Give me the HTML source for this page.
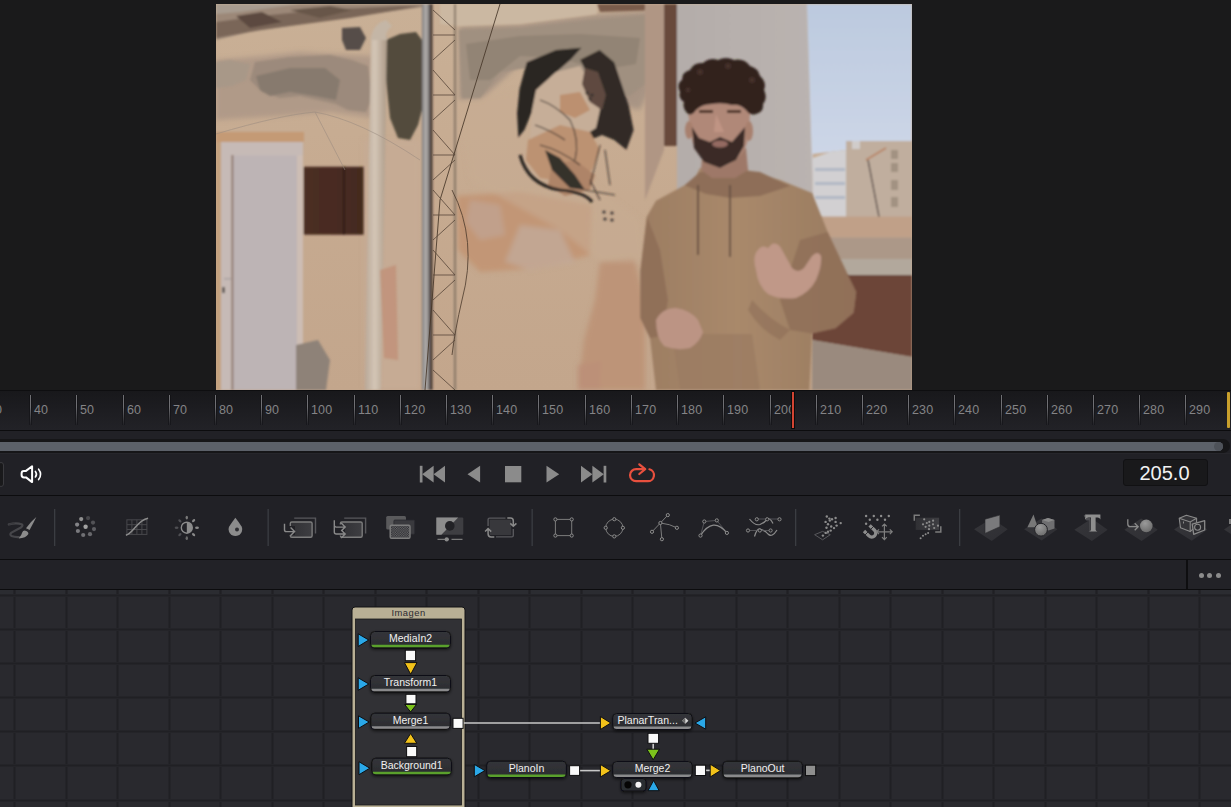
<!DOCTYPE html>
<html><head><meta charset="utf-8">
<style>
*{margin:0;padding:0;box-sizing:border-box}
html,body{width:1231px;height:807px;overflow:hidden;background:#1a1a1b;font-family:"Liberation Sans",sans-serif}
.abs{position:absolute}
#viewer{position:absolute;left:0;top:0;width:1231px;height:390px;background:#1a1a1b}
#photo{position:absolute;left:216px;top:4px;width:696px;height:386px;overflow:hidden;background:#d8c2a0}
#l390{position:absolute;left:0;top:390px;width:1231px;height:1px;background:#0e0e10}
#ruler{position:absolute;left:0;top:391px;width:1231px;height:39px;background:linear-gradient(#18181b,#222227);overflow:hidden}
.tk{position:absolute;top:4px;width:1px;height:30px;background:linear-gradient(#707074,#707074 40%,rgba(112,112,116,0));box-shadow:-1px 0 0 rgba(10,10,12,0.35),1px 0 0 rgba(10,10,12,0.35)}
.lb{position:absolute;top:12px;font-size:12.5px;line-height:14px;color:#848486;letter-spacing:0.15px}
#ph{position:absolute;left:791px;top:0px;width:4px;height:38px;background:#0b0b0c}
#ph i{position:absolute;left:1px;top:1px;width:2px;height:36px;background:#d24432}
#endm{position:absolute;left:1227px;top:1px;width:3px;height:36px;background:#c9a02c;border-radius:1px}
#l430{position:absolute;left:0;top:430px;width:1231px;height:1px;background:#0c0c0e}
#scr{position:absolute;left:0;top:431px;width:1231px;height:22px;background:#212126}
#trk{position:absolute;left:-10px;top:8px;width:1240px;height:14px;border-radius:7px;background:#161618}
#thumb{position:absolute;left:-10px;top:11px;width:1233px;height:9px;border-radius:5px;background:#5c6169}
#knob{position:absolute;left:1214px;top:11px;width:9px;height:9px;border-radius:5px;background:#4e5259}
#tp{position:absolute;left:0;top:453px;width:1231px;height:42px;background:#212126;border-top:1px solid #26262b}
#l495{position:absolute;left:0;top:495px;width:1231px;height:1px;background:#0c0c0e}
#tb{position:absolute;left:0;top:496px;width:1231px;height:63px;background:#212126}
#l559{position:absolute;left:0;top:559px;width:1231px;height:1px;background:#0c0c0e}
#pb{position:absolute;left:0;top:560px;width:1231px;height:29px;background:#222227}
#l589{position:absolute;left:0;top:589px;width:1231px;height:1px;background:#0c0c0e}
#ng{position:absolute;left:0;top:590px;width:1231px;height:217px;background:#29292e;overflow:hidden}
#ngt{position:absolute;left:0;top:0;width:1231px;height:5px;background:#2b2c31}
.gv{position:absolute;top:0;width:3px;height:217px;background:linear-gradient(90deg,#26262b,#202024,#26262b)}
.gh{position:absolute;left:0;width:1231px;height:3px;background:linear-gradient(#26262b,#202024,#26262b)}
.sep{position:absolute;width:2px;background:#3a3b40}
</style></head><body>
<div id="viewer"><div id="photo"><svg width="696" height="386" viewBox="216 4 696 386" style="display:block">
<defs>
<linearGradient id="sky" x1="0" y1="0" x2="0" y2="1"><stop offset="0" stop-color="#bccadf"/><stop offset="1" stop-color="#d0d8e8"/></linearGradient>
<linearGradient id="wallg" x1="0" y1="0" x2="0" y2="1"><stop offset="0" stop-color="#c9b096"/><stop offset="0.5" stop-color="#c6aa90"/><stop offset="1" stop-color="#c3a68c"/></linearGradient>
<linearGradient id="hood" x1="0" y1="0" x2="1" y2="0"><stop offset="0" stop-color="#9c7d62"/><stop offset="0.45" stop-color="#a9896b"/><stop offset="1" stop-color="#987a5f"/></linearGradient>
<linearGradient id="pipe" x1="0" y1="0" x2="1" y2="0"><stop offset="0" stop-color="#b8a898"/><stop offset="0.45" stop-color="#d4c6b6"/><stop offset="1" stop-color="#ac9a88"/></linearGradient>
<linearGradient id="pole" x1="0" y1="0" x2="1" y2="0"><stop offset="0" stop-color="#7e7c7c"/><stop offset="0.5" stop-color="#b6b2b0"/><stop offset="1" stop-color="#625e5c"/></linearGradient>
<linearGradient id="wb" x1="0" y1="0" x2="1" y2="0"><stop offset="0" stop-color="#b4adaa"/><stop offset="1" stop-color="#bab3b0"/></linearGradient>
<linearGradient id="box" x1="0" y1="0" x2="1" y2="0"><stop offset="0" stop-color="#4c2e25"/><stop offset="1" stop-color="#44291f"/></linearGradient>
<filter id="bl" x="-2%" y="-2%" width="104%" height="104%"><feGaussianBlur stdDeviation="0.9"/></filter>
<filter id="bl3" x="-10%" y="-10%" width="120%" height="120%"><feGaussianBlur stdDeviation="2.5"/></filter>
</defs>
<rect x="216" y="4" width="696" height="386" fill="url(#wallg)"/>
<g filter="url(#bl3)">
<!-- gray zone top center -->
<polygon points="459,26 520,24 597,14 664,10 664,60 640,110 600,100 560,90 520,64 480,100 459,100" fill="#a89484"/>
<!-- gray zone left -->
<polygon points="216,60 262,56 300,52 372,56 372,118 330,112 280,116 216,120" fill="#b09a88"/>
<!-- orange patch center -->
<polygon points="457,196 520,192 592,205 590,255 540,268 480,272 458,250" fill="#c29676"/>
<polygon points="520,225 560,230 575,262 530,270 505,262" fill="#c2aa9a" opacity="0.8"/>
<polygon points="470,200 500,205 505,235 480,240 466,222" fill="#c0a494" opacity="0.7"/>
<!-- orange patch lower right -->
<polygon points="600,262 634,258 645,300 645,390 578,390 584,340 595,300" fill="#bd9478"/>
<polygon points="578,365 602,360 600,390 578,390" fill="#bc9078"/>
<!-- lighter wall around mural -->
<polygon points="460,100 520,90 600,190 640,220 645,262 600,262 560,230 470,180" fill="#c6ab92" opacity="0.6"/>
<!-- wall between pole and door -->
<polygon points="364,140 420,140 420,390 364,390" fill="#c6ab94"/>
</g>
<g filter="url(#bl)">
<!-- top ledge -->
<polygon points="216,4 430,4 422,7 340,18 250,32 216,40" fill="#9c8878"/>
<polygon points="216,22 260,16 320,10 400,6 422,6 350,18 260,30 216,38" fill="#7a6658"/>
<polygon points="236,16 262,12 282,22 250,28" fill="#5c4a40"/>
<polygon points="290,10 330,6 352,10 320,18" fill="#685649"/>
<polygon points="216,4 300,4 240,12 216,14" fill="#a89c90"/>
<!-- gray patches upper left -->
<polygon points="255,62 290,57 330,55 352,60 368,66 372,98 366,112 348,110 336,104 318,100 300,96 280,98 262,92 250,80" fill="#9c8a7c"/>
<polygon points="256,76 290,68 325,68 340,80 336,100 315,96 290,92 270,96 260,90" fill="#877a6e"/>
<polygon points="216,62 230,60 250,64 246,80 232,86 216,88" fill="#a89888"/>
<polygon points="342,28 360,27 366,38 360,50 346,50 342,40" fill="#564e48"/>
<!-- mold -->
<polygon points="386,40 400,34 416,32 422,40 422,110 418,125 410,140 398,138 390,118 386,80" fill="#524c3e"/>
<!-- gray patches center top -->
<polygon points="459,30 520,28 590,20 660,14 664,40 650,80 630,96 600,92 580,76 540,66 500,72 480,98 462,98" fill="#a09080"/>
<polygon points="466,44 520,36 580,34 640,38 636,64 600,70 560,58 520,56 490,80 470,80" fill="#928474"/>
<polygon points="440,4 597,4 597,14 520,24 459,26 440,24" fill="#cbb8a2"/>
<polygon points="597,4 664,4 664,10 600,12" fill="#7a5c4c"/>
<!-- door -->
<rect x="216" y="132" width="88" height="10" fill="#c49a74"/>
<rect x="216" y="142" width="5" height="248" fill="#c4a27e"/>
<rect x="221" y="142" width="82" height="248" fill="#c6bab6"/>
<rect x="233" y="155.5" width="64" height="234.5" fill="#bdb4b5"/>
<rect x="231.5" y="155" width="1.8" height="235" fill="#8c7468"/>
<rect x="297" y="155.5" width="6" height="234.5" fill="#cdbdb4"/>
<rect x="224" y="278" width="7" height="1.5" fill="#a8a0a0"/>
<rect x="222.5" y="287" width="2" height="6" fill="#2a2420"/>
<!-- box -->
<rect x="303.6" y="166.7" width="60" height="68" fill="url(#box)"/>
<rect x="343" y="166.7" width="1.6" height="68" fill="#2a1a14"/>
<!-- stains lower left -->
<polygon points="296,345 318,340 330,360 326,390 296,390" fill="#8e8278"/>
<!-- pipe -->
<polygon points="371,36 387,36 381,390 365,390" fill="url(#pipe)"/>
<polygon points="380,270 396,265 398,360 384,358" fill="#c09078" opacity="0.8"/>
<path d="M371,40 Q372,24 386,20 L392,26 Q384,32 387,40 Z" fill="#c4b6a6"/>
<!-- mural wings -->
<polygon points="519.5,89 526.8,62.3 556,50 581.4,47.7 570.5,59.8 551,76.8 536.5,101 524.4,130 518.3,137.5 517.1,113" fill="#2c2624"/>
<polygon points="580.2,59.8 599.7,50 614.2,62.3 621.5,84 628.8,106 633.6,130 626.4,149.7 614.2,140 602,135 590,140 580.2,154.5 575.4,149.7 587.5,125.4 599.7,108.4 594.8,86.5 585,69.5" fill="#302a26"/>
<!-- mural body -->
<polygon points="536,90 556,72 580,66 594,88 600,110 596,128 585,135 570,150 552,165 538,160 530,140 532,110" fill="#c6ae98"/>
<polygon points="585,68 598,72 606,95 602,110 590,102 582,84" fill="#5e4a40"/>
<polygon points="560,95 580,92 590,110 575,118 560,112" fill="#bc9070"/>
<polygon points="528,140 560,125 590,132 600,150 592,170 570,182 540,178 526,160" fill="#bc9272"/>
<polygon points="552,165 575,160 595,175 590,190 565,196 548,185" fill="#ae8468"/>
<g fill="none" stroke="#2c2624" stroke-width="1.1" opacity="0.85">
<path d="M540,100 Q555,105 570,120 Q580,140 575,160"/>
<path d="M535,125 Q550,130 565,140"/>
<path d="M540,145 Q560,150 580,165"/>
<path d="M600,145 L590,185 M605,150 L610,185 M590,180 L600,200 M585,190 L615,195"/>
</g>
<path d="M520,155 Q528,185 560,190 Q585,192 592,202" fill="none" stroke="#2c2624" stroke-width="3.2"/>
<polygon points="545,150 560,158 575,175 585,190 570,188 552,170" fill="#36302c"/>
<g fill="#36302c"><circle cx="587" cy="93" r="1.6"/><circle cx="592" cy="95" r="1.6"/><circle cx="590" cy="99" r="1.6"/></g>
<g fill="#3a3030"><circle cx="604" cy="212" r="1.6"/><circle cx="612" cy="213" r="1.6"/><circle cx="605" cy="219" r="1.6"/><circle cx="612" cy="220" r="1.6"/></g>
<!-- wall right edge strip -->
<polygon points="645,4 664,4 664,150 645,200" fill="#b09684"/>
<rect x="664" y="4" width="13" height="142" fill="#68483a"/>
<!-- white building -->
<polygon points="677,4 807,4 812.6,183 812.6,200 677,200" fill="url(#wb)"/>
<!-- sky -->
<polygon points="807,4 912,4 912,145 846,150 812.6,154 812.6,183" fill="url(#sky)"/>
<!-- buildings -->
<polygon points="812.6,158 830,152 846,150 846,217 812.6,217" fill="#d2d0d2"/>
<rect x="846" y="141" width="66" height="76" fill="#c0ae9e"/>
<rect x="852" y="141" width="8" height="8" fill="#d0ccca"/>
<g fill="#a29282"><rect x="891" y="150" width="7" height="9"/><rect x="891" y="163" width="7" height="9"/><rect x="891" y="180" width="7" height="10"/><rect x="891" y="197" width="7" height="10"/></g>
<g fill="#b0b8c4"><rect x="815" y="168" width="30" height="3"/><rect x="815" y="182" width="30" height="3"/><rect x="815" y="196" width="30" height="3"/></g>
<path d="M868,160 L880,222" stroke="#3a3030" stroke-width="1.2"/>
<path d="M866,160 L886,148" stroke="#b88060" stroke-width="1.5"/>
<!-- parapet etc -->
<rect x="812" y="216.5" width="100" height="21" fill="#c0a088"/>
<rect x="812" y="237.5" width="100" height="22" fill="#ac9888"/>
<rect x="812" y="259" width="100" height="16" fill="#b2a89c"/>
<polygon points="812,275 912,275 912,357 812,340" fill="#6c4438"/>
<polygon points="812,340 912,357 912,390 812,390" fill="#9a8a7e"/>
<!-- pole -->
<rect x="422" y="4" width="8" height="386" fill="url(#pole)"/>
<rect x="430" y="4" width="2.5" height="386" fill="#463830"/>
<rect x="454" y="4" width="2" height="386" fill="#887868"/>
</g>
<g stroke="#524236" stroke-width="0.9" fill="none" opacity="0.85">
<path d="M433,10 L455,30 M433,60 L455,40 M433,70 L455,95 M433,120 L455,100 M433,130 L455,155 M433,180 L455,160 M433,190 L455,215 M433,240 L455,220 M433,250 L455,275 M433,300 L455,280 M433,310 L455,335 M433,360 L455,340 M433,370 L455,390"/>
<path d="M433,35 H455 M433,95 H455 M433,155 H455 M433,215 H455 M433,275 H455 M433,335 H455"/>
<path d="M500,4 L440,200 L425,390" stroke="#463628" stroke-width="1"/>
<path d="M452,190 Q478,240 462,300 Q455,330 452,355" stroke="#463628" stroke-width="0.9"/>
</g>
<g stroke="#9a8c80" stroke-width="0.8" fill="none" opacity="0.7">
<path d="M216,134 Q280,115 315,112 Q360,120 420,160"/>
<path d="M315,112 L345,170"/>
</g>
<g filter="url(#bl)">
<!-- hoodie -->
<path d="M656,390 L650,338 L640.4,318 L640.4,271 L646.9,216.4 L656,200.8 L684.6,185.2 L693.7,180 L700,168 L740,166 L747,170 L780,180 L812.1,193 L827.7,232 L848.5,276.3 L856.3,291.9 L853.7,312.7 L835.5,328.3 L812.1,333.5 L809.5,390 Z" fill="url(#hood)"/>
<path d="M684.6,185.2 L700,172 L740,170 L760,172 L790,186 L760,196 L730,198 L706,194 Z" fill="#8e6e58"/>
<path d="M640.4,271 L646.9,216.4 L660,250 L668,300 L662,336 L650,338 L640.4,318 Z" fill="#8a6a54" opacity="0.7"/>
<path d="M800,240 L827.7,232 L848.5,276.3 L856.3,291.9 L853.7,312.7 L835.5,328.3 L812.1,333.5 L790,330 L780,300 Z" fill="#8e6e58" opacity="0.8"/>
<path d="M672,334 L752,334 L760,390 L680,390 Z" fill="#9a7a62" opacity="0.7"/>
<path d="M752,300 Q770,320 790,330 L780,340 Q760,330 748,310 Z" fill="#8a6a54" opacity="0.5"/>
<!-- neck -->
<polygon points="703,148 746,148 748,170 735,178 712,178 701,170" fill="#9e7868"/>
<!-- face -->
<path d="M688,112 Q688,100 718,98 Q750,100 750,114 L748,140 Q742,162 720,168 Q698,162 692,140 Z" fill="#b08878"/>
<ellipse cx="689" cy="130" rx="4" ry="9" fill="#a8806e"/>
<ellipse cx="749" cy="131" rx="4" ry="10" fill="#a8806e"/>
<!-- beard -->
<path d="M692,127 L699,138 L710,142 L720,137 L732,142 L745,127 L744,146 L736,160 L720,168 L704,162 L694,148 Z" fill="#3a2c28"/>
<ellipse cx="720" cy="144" rx="8" ry="3.5" fill="#946a62"/>
<rect x="699" y="110" width="14" height="3" fill="#4a3328"/>
<rect x="727" y="110" width="14" height="3" fill="#4a3328"/>
<path d="M716,114 L714,132 L724,132 Z" fill="#c09484"/>
<!-- hair -->
<path d="M680,92 Q676,84 682,80 Q682,72 690,70 Q694,62 703,63 Q710,57 718,60 Q726,56 734,60 Q744,58 750,66 Q758,68 760,76 Q767,82 764,90 Q768,98 763,104 Q764,112 756,114 Q750,116 746,110 Q740,104 732,105 Q722,102 712,104 Q702,104 696,110 Q692,116 688,114 Q682,108 684,102 Q678,98 680,92 Z" fill="#30231e"/>
<g fill="#44302a"><circle cx="700" cy="72" r="3"/><circle cx="728" cy="66" r="3"/><circle cx="752" cy="80" r="3"/><circle cx="688" cy="90" r="2.5"/></g>
<!-- hands -->
<path d="M756,270 Q752,256 758,250 Q762,244 768,248 L772,244 Q778,242 782,250 L792,268 Q798,274 804,268 L812,256 Q818,250 821,256 Q822,266 816,280 Q810,292 796,298 Q780,300 768,294 Q758,286 756,270 Z" fill="#c09888"/>
<path d="M656,320 Q662,308 676,308 Q690,310 698,320 L703,332 Q700,342 690,348 Q676,351 664,346 Q656,338 656,320 Z" fill="#bc9484"/>
<!-- drawstrings -->
<rect x="697" y="185" width="2" height="70" fill="#6a5244"/>
<rect x="729" y="185" width="2" height="72" fill="#6a5244"/>
</g>
</svg>
</div></div>
<div id="l390"></div>
<div id="ruler"><div class="tk" style="left:-16px"></div><div class="lb" style="left:-12px">30</div><div class="tk" style="left:30px"></div><div class="lb" style="left:34px">40</div><div class="tk" style="left:76px"></div><div class="lb" style="left:80px">50</div><div class="tk" style="left:123px"></div><div class="lb" style="left:127px">60</div><div class="tk" style="left:169px"></div><div class="lb" style="left:173px">70</div><div class="tk" style="left:215px"></div><div class="lb" style="left:219px">80</div><div class="tk" style="left:261px"></div><div class="lb" style="left:265px">90</div><div class="tk" style="left:307px"></div><div class="lb" style="left:311px">100</div><div class="tk" style="left:354px"></div><div class="lb" style="left:358px">110</div><div class="tk" style="left:400px"></div><div class="lb" style="left:404px">120</div><div class="tk" style="left:446px"></div><div class="lb" style="left:450px">130</div><div class="tk" style="left:492px"></div><div class="lb" style="left:496px">140</div><div class="tk" style="left:538px"></div><div class="lb" style="left:542px">150</div><div class="tk" style="left:585px"></div><div class="lb" style="left:589px">160</div><div class="tk" style="left:631px"></div><div class="lb" style="left:635px">170</div><div class="tk" style="left:677px"></div><div class="lb" style="left:681px">180</div><div class="tk" style="left:723px"></div><div class="lb" style="left:727px">190</div><div class="tk" style="left:770px"></div><div class="lb" style="left:774px">200</div><div class="tk" style="left:816px"></div><div class="lb" style="left:820px">210</div><div class="tk" style="left:862px"></div><div class="lb" style="left:866px">220</div><div class="tk" style="left:908px"></div><div class="lb" style="left:912px">230</div><div class="tk" style="left:954px"></div><div class="lb" style="left:958px">240</div><div class="tk" style="left:1001px"></div><div class="lb" style="left:1005px">250</div><div class="tk" style="left:1047px"></div><div class="lb" style="left:1051px">260</div><div class="tk" style="left:1093px"></div><div class="lb" style="left:1097px">270</div><div class="tk" style="left:1139px"></div><div class="lb" style="left:1143px">280</div><div class="tk" style="left:1185px"></div><div class="lb" style="left:1189px">290</div><div id="ph"><i></i></div><div id="endm"></div></div>
<div id="l430"></div>
<div id="scr"><div id="trk"></div><div id="thumb"></div><div id="knob"></div></div>
<div id="tp"><div style="position:absolute;left:-2px;top:8px;width:6px;height:25px;border:1px solid #3a3a3e;border-radius:3px;background:#19191b"></div>
<svg style="position:absolute;left:0;top:-1px" width="1231" height="42" viewBox="0 453 1231 42">
<g fill="#8b8b8b">
<rect x="419.8" y="465.8" width="2.7" height="16.7"/>
<polygon points="422.2,474.2 433.6,465.8 433.6,482.5"/>
<polygon points="433.6,474.2 445,465.8 445,482.5"/>
<polygon points="467.5,474.2 480.1,465.8 480.1,482.5"/>
<rect x="505" y="466" width="16.3" height="16.3"/>
<polygon points="559.2,474.2 546.5,465.8 546.5,482.5"/>
<polygon points="581,465.8 592.4,474.2 581,482.5"/>
<polygon points="592.4,465.8 603.8,474.2 592.4,482.5"/>
<rect x="603.6" y="465.8" width="2.7" height="16.7"/>
</g>
<g fill="none" stroke="#e8503e" stroke-width="2.2" stroke-linecap="round" stroke-linejoin="round">
<path d="M644.5,469.1 L636.1,469.1 A6.05,6.05 0 0 0 636.1,481.2 L647.5,481.2 A6.05,6.05 0 0 0 649.4,469.3"/>
<path d="M639.3,464.3 L645.2,469.2 L639.3,474"/>
</g>
<!-- speaker -->
<g fill="none" stroke="#ffffff" stroke-width="2" stroke-linejoin="round">
<path d="M26,470.9 L32.1,466.3 L32.1,482.1 L26,477.4 L24,477.4 Q21.6,477.4 21.6,475 L21.6,473.3 Q21.6,470.9 24,470.9 Z"/>
</g>
<g fill="none" stroke="#ffffff" stroke-width="1.6" stroke-linecap="round">
<path d="M35.4,471.4 Q37.6,474.2 35.4,477"/>
<path d="M38.6,469.2 Q42.6,474.3 38.6,479.6"/>
</g>
</svg>
<div style="position:absolute;left:1123px;top:5px;width:85px;height:27px;background:#19191b;border:1px solid #111113;border-radius:3px"></div>
<div style="position:absolute;left:1123px;top:6px;width:85px;height:27px;color:#f2f2f2;font-size:20px;line-height:27px;text-align:center;padding-right:2px">205.0</div>
</div>
<div id="l495"></div>
<div id="tb"><svg style="position:absolute;left:0;top:0" width="1231" height="63" viewBox="0 496 1231 63">
<defs>
<linearGradient id="flr" x1="0" y1="0" x2="1" y2="1"><stop offset="0" stop-color="#36363a"/><stop offset="1" stop-color="#2e2e33"/></linearGradient>
<linearGradient id="rg" x1="0" y1="0" x2="1" y2="0"><stop offset="0" stop-color="#303034"/><stop offset="1" stop-color="#3e3e42"/></linearGradient>
<radialGradient id="sph" cx="0.4" cy="0.3" r="0.7"><stop offset="0" stop-color="#9a9a9a"/><stop offset="1" stop-color="#6e6e6e"/></radialGradient>
<pattern id="chk" width="2.4" height="2.4" patternUnits="userSpaceOnUse"><rect width="2.4" height="2.4" fill="#2a2a2e"/><rect width="1.2" height="1.2" fill="#6a6a6c"/><rect x="1.2" y="1.2" width="1.2" height="1.2" fill="#6a6a6c"/></pattern>
</defs>
<!-- separators -->
<g fill="#3b3d42">
<rect x="54" y="509" width="1.3" height="37"/>
<rect x="267.5" y="509" width="1.3" height="37"/>
<rect x="531.5" y="509" width="1.3" height="37"/>
<rect x="795" y="509" width="1.3" height="37"/>
<rect x="959" y="509" width="1.3" height="37"/>
</g>
<!-- brush -->
<path d="M8.8,524.4 Q16,522.6 21.6,524.2 Q23.6,525.2 21,527.4 Q15,530.5 11.5,532.6 Q9.2,534.6 11.6,536 Q14.5,537.2 19,537" fill="none" stroke="#46464a" stroke-width="2.2" stroke-linecap="round"/>
<path d="M9,524.3 Q12,523.6 14,523.4" fill="none" stroke="#3a3a3e" stroke-width="1.2" stroke-linecap="round"/>
<path d="M36.3,517.1 Q33.5,523 29.6,530 L26,528.2 Q30.5,522 36.3,517.1 Z" fill="#8c8c8c"/>
<path d="M25.6,529.2 L29.8,531.2" stroke="#2a2a2e" stroke-width="1.2"/>
<path d="M24.6,530.4 Q28.6,531.2 28.4,534 Q26,538 18.6,538.6 Q21.6,535.5 22.2,532.6 Q22.8,530.4 24.6,530.4 Z" fill="#8c8c8c"/>
<!-- dots ring -->
<circle cx="85.6" cy="526.7" r="2.2" fill="#a2a2a2"/>
<circle cx="81.2" cy="519.1" r="2.1" fill="#909090"/>
<circle cx="88.1" cy="518.1" r="2.1" fill="#46464a"/>
<circle cx="93" cy="522.6" r="2.1" fill="#525256"/>
<circle cx="94" cy="529.1" r="2.1" fill="#5e5e62"/>
<circle cx="90" cy="534.2" r="2.1" fill="#68686c"/>
<circle cx="83.2" cy="535" r="2.1" fill="#707074"/>
<circle cx="77.9" cy="531" r="2.1" fill="#7a7a7e"/>
<circle cx="77.1" cy="524.6" r="2.1" fill="#848488"/>
<!-- curves -->
<g stroke="#48484c" stroke-width="1" fill="none">
<rect x="126.9" y="519.8" width="20" height="14.6"/>
<path d="M131.9,519.8 V534.4 M136.9,519.8 V534.4 M141.9,519.8 V534.4 M126.9,524.7 H146.9 M126.9,529.5 H146.9"/>
</g>
<path d="M125.9,535.3 C 134,533 137,520 148.1,518.2" fill="none" stroke="#8c8c8c" stroke-width="1.5"/>
<!-- sun -->
<circle cx="186.8" cy="527.7" r="5.5" fill="none" stroke="#8c8c8c" stroke-width="1.4"/>
<path d="M186.8,522.2 A5.5,5.5 0 0 1 186.8,533.2 Z" fill="#8c8c8c"/>
<g>
<ellipse cx="186.8" cy="517.6" rx="1.2" ry="1.9" fill="#7a7a7a"/>
<ellipse cx="193.6" cy="520.7" rx="1.2" ry="1.9" transform="rotate(45 193.6 520.7)" fill="#8a8a8a"/>
<ellipse cx="197" cy="527.7" rx="1.9" ry="1.2" fill="#8a8a8a"/>
<ellipse cx="193.6" cy="534.7" rx="1.2" ry="1.9" transform="rotate(-45 193.6 534.7)" fill="#8a8a8a"/>
<ellipse cx="186.8" cy="538.2" rx="1.2" ry="1.9" fill="#6a6a6a"/>
<ellipse cx="179.9" cy="534.6" rx="1.2" ry="1.9" transform="rotate(45 179.9 534.6)" fill="#4e4e52"/>
<ellipse cx="176.6" cy="527.7" rx="1.9" ry="1.2" fill="#4e4e52"/>
<ellipse cx="179.9" cy="520.8" rx="1.2" ry="1.9" transform="rotate(-45 179.9 520.8)" fill="#4e4e52"/>
</g>
<!-- drop -->
<path d="M235.4,517.8 Q239,522.5 241.6,526.5 A6.8,6.8 0 1 1 229.2,526.5 Q231.8,522.5 235.4,517.8 Z" fill="#8c8c8c"/>
<circle cx="237" cy="529.6" r="2" fill="#2e2e32"/>
<!-- merge -->
<path d="M294.2,518.1 H315.5 V533.6" fill="none" stroke="#58585c" stroke-width="1.4"/>
<rect x="290.3" y="522" width="21.8" height="15.2" rx="1.5" fill="url(#rg)" stroke="#7c7c7c" stroke-width="1.4"/>
<rect x="284" y="526" width="11" height="9" fill="#212126"/>
<path d="M284.5,523.8 V529.7 Q284.5,531.6 286.5,531.6 H294.5 M290.6,527.6 L294.6,531.6 L290.6,535.6" fill="none" stroke="#8a8a8a" stroke-width="1.4"/>
<!-- merge multi -->
<path d="M344.2,518.1 H365.6 V533.6" fill="none" stroke="#58585c" stroke-width="1.4"/>
<rect x="340.4" y="522" width="21.8" height="15.2" rx="1.5" fill="url(#rg)" stroke="#7c7c7c" stroke-width="1.4"/>
<rect x="333" y="524.5" width="12" height="11" fill="#212126"/>
<path d="M334.3,520.2 V532 Q334.3,534 336.3,534 H345 M334.3,525.3 Q334.3,527.1 336.3,527.1 H345 M341.2,523.1 L345.2,527.1 L341.2,531.1 M341.2,530 L345.2,534 L341.2,538" fill="none" stroke="#8a8a8a" stroke-width="1.4"/>
<!-- matte -->
<rect x="386.2" y="516" width="19.8" height="13.6" rx="1.5" fill="#5a5a5c"/>
<rect x="393.9" y="520" width="20.8" height="14.3" rx="1" fill="#3a3a3e" stroke="#2a2a2e" stroke-width="0.8"/>
<rect x="390.2" y="525.2" width="19.8" height="13.1" rx="1.2" fill="url(#chk)" stroke="#7c7c7c" stroke-width="1.4"/>
<!-- luma mask -->
<rect x="436.3" y="517.4" width="27" height="17.3" rx="1" fill="#3e3e42"/>
<polygon points="436.3,517.4 458.2,517.4 441.4,534.7 436.3,534.7" fill="#8c8c8c"/>
<circle cx="449.8" cy="525.9" r="4.8" fill="#222226"/>
<path d="M437.5,539.4 H449 M451.5,539.4 H462.5" stroke="#7a7a7a" stroke-width="1.2"/>
<circle cx="446.7" cy="539.4" r="2.1" fill="#8a8a8a"/>
<!-- transform loop -->
<rect x="489.7" y="519.7" width="21.5" height="15.3" fill="#38383c"/>
<path d="M505.5,518.1 H489.5 Q488.1,518.1 488.1,519.5 V526 M513.3,529 V535.5 Q513.3,536.9 511.9,536.9 H496" fill="none" stroke="#58585c" stroke-width="1.4"/>
<path d="M507.3,518.1 H510.5 Q513.3,518.1 513.3,521 V526 M510.3,523.4 L513.3,526.3 L516.4,523.4" fill="none" stroke="#8a8a8a" stroke-width="1.5"/>
<path d="M494.3,536.9 H491 Q488.1,536.9 488.1,534 V528.8 M485.1,531.6 L488.1,528.5 L491.2,531.6" fill="none" stroke="#8a8a8a" stroke-width="1.5"/>
<!-- rectangle mask -->
<g fill="none" stroke="#7c7c7c" stroke-width="1">
<rect x="555.4" y="519.4" width="16.3" height="16.2"/>
</g>
<g fill="#222226" stroke="#8c8c8c" stroke-width="1">
<circle cx="555.4" cy="519.4" r="1.6"/><circle cx="571.7" cy="519.4" r="1.6"/><circle cx="555.4" cy="535.6" r="1.6"/><circle cx="571.7" cy="535.6" r="1.6"/>
</g>
<!-- ellipse mask -->
<circle cx="614.3" cy="527.8" r="8.6" fill="none" stroke="#7c7c7c" stroke-width="1"/>
<g fill="#222226" stroke="#8c8c8c" stroke-width="1">
<circle cx="614.3" cy="519.2" r="1.6"/><circle cx="622.9" cy="527.8" r="1.6"/><circle cx="614.3" cy="536.4" r="1.6"/><circle cx="605.7" cy="527.8" r="1.6"/>
</g>
<!-- polygon mask -->
<path d="M652,531.8 L660.4,523 L667.8,515.1 M660.4,523 L661.9,539.2 M660.4,523 Q670,524 676.9,527.8" fill="none" stroke="#7c7c7c" stroke-width="1"/>
<g fill="#222226" stroke="#8c8c8c" stroke-width="1">
<circle cx="667.8" cy="515.1" r="1.6"/><circle cx="660.4" cy="523" r="1.6"/><circle cx="652" cy="531.8" r="1.6"/><circle cx="676.9" cy="527.8" r="1.6"/><circle cx="661.9" cy="539.2" r="1.6"/>
</g>
<!-- bspline mask -->
<path d="M700.5,535.6 L704.3,521.5 L716.8,520.4 L726.9,532.9" fill="none" stroke="#5e5e62" stroke-width="0.8"/>
<path d="M700.5,535.6 Q713,516 726.9,532.9" fill="none" stroke="#8c8c8c" stroke-width="1.2"/>
<g fill="#222226" stroke="#8c8c8c" stroke-width="1">
<circle cx="700.5" cy="535.6" r="1.6"/><circle cx="704.3" cy="521.5" r="1.6"/><circle cx="716.8" cy="520.4" r="1.6"/><circle cx="726.9" cy="532.9" r="1.6"/>
</g>
<!-- wave mask -->
<path d="M749.5,519 Q755,526 760,524.5 Q764,523 767,519.5 Q770,517 773,523.5" fill="none" stroke="#8c8c8c" stroke-width="1.2"/>
<path d="M754.5,536.5 Q757,528 760,529 Q766,531 768,534 Q772,538 777,530" fill="none" stroke="#8c8c8c" stroke-width="1.2"/>
<path d="M756.5,519 H779.5 M748,530.5 H771" fill="none" stroke="#5e5e62" stroke-width="0.8"/>
<g fill="#222226" stroke="#8c8c8c" stroke-width="1">
<circle cx="756.8" cy="519.3" r="1.6"/><circle cx="767.2" cy="519.3" r="1.6"/><circle cx="779.5" cy="519.3" r="1.6"/>
<circle cx="748" cy="530.5" r="1.6"/><circle cx="759.8" cy="530.5" r="1.6"/><circle cx="770.6" cy="530.5" r="1.6"/>
</g>
<!-- pEmitter -->
<polygon points="814.6,534.7 822.6,531.4 830.3,534.7 822.6,539.8" fill="none" stroke="#58585c" stroke-width="1"/>
<g fill="#8c8c8c">
<circle cx="822.9" cy="535.6" r="1.2"/><circle cx="825.7" cy="532.9" r="1.2"/><circle cx="828" cy="531.7" r="1.2"/><circle cx="830.7" cy="530.6" r="1.2"/><circle cx="826.5" cy="527.7" r="1.2"/><circle cx="831.2" cy="526.5" r="1.2"/><circle cx="834" cy="528.1" r="1.2"/><circle cx="836.6" cy="525.6" r="1.2"/><circle cx="825.6" cy="521.9" r="1.2"/><circle cx="828" cy="524.2" r="1.2"/><circle cx="829.8" cy="520.6" r="1.2"/><circle cx="835.6" cy="521.9" r="1.2"/><circle cx="840.7" cy="523.1" r="1.2"/><circle cx="829.4" cy="518.6" r="1.2"/><circle cx="832" cy="519.3" r="1.2"/><circle cx="835.6" cy="518" r="1.2"/><circle cx="826.8" cy="516.5" r="1.2"/>
</g>
<!-- magnet -->
<g fill="#8c8c8c">
<circle cx="866.1" cy="516" r="1.2"/><circle cx="873.8" cy="516" r="1.2"/><circle cx="881.1" cy="516" r="1.2"/><circle cx="888.8" cy="516" r="1.2"/>
<circle cx="869.8" cy="519.8" r="1.2"/><circle cx="877.4" cy="519.8" r="1.2"/><circle cx="885" cy="519.8" r="1.2"/>
<circle cx="866.1" cy="523.7" r="1.2"/>
</g>
<path d="M869.6,525.3 L874.63,530.27 A4,4 0 0 1 874.63,535.93 A4,4 0 0 1 868.97,535.93 L864,530.96" fill="none" stroke="#8c8c8c" stroke-width="3.3"/>
<path d="M870.4,529.6 L874,526 M864.7,535.3 L868.3,531.7" fill="none" stroke="#212126" stroke-width="0.9"/>
<path d="M884.4,524 V539.6 M876.6,531.8 H892.2 M882,526.4 L884.4,524 L886.8,526.4 M882,537.2 L884.4,539.6 L886.8,537.2 M879,529.4 L876.6,531.8 L879,534.2 M889.8,529.4 L892.2,531.8 L889.8,534.2" fill="none" stroke="#7e7e7e" stroke-width="1.2"/>
<!-- pRender -->
<rect x="915.7" y="517.7" width="23.4" height="12.2" fill="url(#rg)"/>
<path d="M914.3,520.7 V515.3 H919.9 M935.2,531.9 H940.8 V526.3" fill="none" stroke="#7c7c7c" stroke-width="1.5"/>
<g fill="#8c8c8c">
<circle cx="924.2" cy="519.3" r="1.1"/><circle cx="933.1" cy="520.7" r="1.1"/><circle cx="929.3" cy="521.9" r="1.1"/><circle cx="926.8" cy="523" r="1.1"/><circle cx="923" cy="524.3" r="1.1"/><circle cx="929.3" cy="525.7" r="1.1"/><circle cx="933" cy="524.3" r="1.1"/><circle cx="938" cy="525.7" r="1.1"/><circle cx="925.6" cy="526.8" r="1.1"/><circle cx="934.2" cy="528" r="1.1"/><circle cx="929" cy="529.2" r="1.1"/>
<circle cx="928.1" cy="533" r="1"/><circle cx="925.6" cy="534.2" r="1"/><circle cx="923" cy="535.7" r="1"/><circle cx="920.6" cy="538.2" r="1"/>
</g>
<!-- 3D floors -->
<g fill="url(#flr)">
<polygon points="974.1,529.3 991.7,518.5 1007.7,529.3 991.7,540.9"/>
<polygon points="1024.2,529.3 1041.5,518.5 1057.4,529.3 1041.7,540.5"/>
<polygon points="1074.4,529.7 1091.9,518.5 1107.6,529.7 1091.9,540.9"/>
<polygon points="1124.4,529.7 1141.2,518.5 1157.7,529.7 1141.6,540.9"/>
<polygon points="1174.1,529.4 1191,518 1207.4,529.4 1191.8,540.7"/>
<polygon points="1224,529.4 1241,518 1257,529.4 1241,540.7"/>
</g>
<!-- plane -->
<polygon points="985,519.2 999.9,515.1 999.9,526.7 985,533.4" fill="#7a7a7c" stroke="#28282c" stroke-width="0.6"/>
<!-- shapes -->
<polygon points="1033.5,514.4 1027.4,527.3 1037.7,527.3" fill="#787878"/>
<polygon points="1042.1,520 1048,518.1 1054.5,520 1054.5,528.5 1048.5,530.4 1042.1,528.5" fill="#6e6e70"/>
<polygon points="1042.1,520 1048,518.1 1054.5,520 1048.5,522" fill="#8a8a8a"/>
<circle cx="1041" cy="529.7" r="6.4" fill="url(#sph)" stroke="#222226" stroke-width="1"/>
<!-- text3d -->
<path d="M1083.6,515.8 L1085.2,514.6 V518.8 L1086.4,520.4 H1089.4 V531 L1087.9,532.6 L1089.4,531.6 H1090.4 V518.1 H1085.2 Z" fill="#4e4e52"/>
<path d="M1085.2,514.4 H1100.4 V519.6 Q1099.6,517.6 1097.6,517.6 H1095.6 V529.8 Q1095.8,530.8 1097.4,531.6 H1089.2 Q1090.8,530.8 1091,529.8 V517.6 H1088.6 Q1086.2,517.6 1085.2,519.8 Z" fill="#8e8e8e"/>
<!-- merge3d -->
<path d="M1127.8,519.2 V524 Q1127.8,526.7 1130.5,526.7 H1138 M1134.7,523.2 L1138.2,526.7 L1134.7,530.2" fill="none" stroke="#8a8a8a" stroke-width="1.3"/>
<circle cx="1146.3" cy="525.9" r="6.3" fill="url(#sph)"/>
<!-- camera3d -->
<path d="M1179.2,518.2 L1186.4,515.2 L1196.6,518.2 L1196.6,525.7 L1190.2,531.6 L1180.5,527.8 Z" fill="#333337" stroke="#8a8a8a" stroke-width="1.1" stroke-linejoin="round"/>
<path d="M1179.2,518.2 L1190.2,522 L1196.6,518.2 M1190.2,522 V531.6" fill="none" stroke="#8a8a8a" stroke-width="1.1"/>
<path d="M1192.3,524.1 L1204.7,520.6 L1204.7,530 L1193.7,534.3 Z" fill="#2a2a2e" stroke="#8a8a8a" stroke-width="1.3" stroke-linejoin="round"/>
<circle cx="1197.6" cy="527.2" r="3" fill="none" stroke="#8a8a8a" stroke-width="1.1"/>
<rect x="1183" y="521.5" width="1" height="2" fill="#8a8a8a"/>
<!-- partial icon at edge -->
<rect x="1229" y="519" width="3" height="5" fill="#7a7a7a"/>
</svg>
</div>
<div id="l559"></div>
<div id="pb"><div style="position:absolute;left:1186px;top:0;width:2px;height:29px;background:#0e0e10"></div>
<div style="position:absolute;left:1198.7px;top:12.5px;width:5px;height:5px;border-radius:50%;background:#8c8c8c"></div>
<div style="position:absolute;left:1207.4px;top:12.5px;width:5px;height:5px;border-radius:50%;background:#8c8c8c"></div>
<div style="position:absolute;left:1216.1px;top:12.5px;width:5px;height:5px;border-radius:50%;background:#8c8c8c"></div>
</div>
<div id="l589"></div>
<div id="ng"><div id="ngt"></div><div class="gv" style="left:13px"></div><div class="gv" style="left:65px"></div><div class="gv" style="left:116px"></div><div class="gv" style="left:168px"></div><div class="gv" style="left:219px"></div><div class="gv" style="left:271px"></div><div class="gv" style="left:322px"></div><div class="gv" style="left:374px"></div><div class="gv" style="left:425px"></div><div class="gv" style="left:477px"></div><div class="gv" style="left:528px"></div><div class="gv" style="left:580px"></div><div class="gv" style="left:631px"></div><div class="gv" style="left:683px"></div><div class="gv" style="left:735px"></div><div class="gv" style="left:786px"></div><div class="gv" style="left:838px"></div><div class="gv" style="left:889px"></div><div class="gv" style="left:941px"></div><div class="gv" style="left:992px"></div><div class="gv" style="left:1044px"></div><div class="gv" style="left:1095px"></div><div class="gv" style="left:1147px"></div><div class="gv" style="left:1198px"></div><div class="gh" style="top:4px"></div><div class="gh" style="top:38px"></div><div class="gh" style="top:72px"></div><div class="gh" style="top:106px"></div><div class="gh" style="top:140px"></div><div class="gh" style="top:174px"></div><div class="gh" style="top:209px"></div><svg style="position:absolute;left:0;top:0" width="1231" height="217" viewBox="0 590 1231 217">
<defs>
<filter id="sh" x="-20%" y="-30%" width="140%" height="180%"><feDropShadow dx="0" dy="1.5" stdDeviation="1.5" flood-color="#000" flood-opacity="0.6"/></filter>
<linearGradient id="nd" x1="0" y1="0" x2="0" y2="1"><stop offset="0" stop-color="#34353a"/><stop offset="1" stop-color="#2a2b2f"/></linearGradient>
</defs>
<!-- group frame -->
<path d="M352,810 V610 Q352,607 355,607 H462 Q465,607 465,610 V810 Z" fill="#b9b095" stroke="#121214" stroke-width="1"/>
<rect x="355.5" y="619" width="106" height="186" fill="#313135" stroke="#19191b" stroke-width="0.8"/>
<text x="408.6" y="616.2" font-family="Liberation Sans" font-size="9.4" letter-spacing="0.5" fill="#2c2a30" text-anchor="middle">Imagen</text>
<!-- links -->
<g stroke="#c8c8c8" stroke-width="1.6">
<line x1="463" y1="723" x2="601" y2="723"/>
<line x1="579.5" y1="770.6" x2="601" y2="770.6"/>
<line x1="705.5" y1="770.4" x2="711" y2="770.4"/>
<line x1="653.2" y1="743" x2="653.2" y2="750"/>
</g>
<!-- nodes -->
<g filter="url(#sh)">
<rect x="370.5" y="631.5" width="80" height="16.3" rx="4" fill="url(#nd)" stroke="#111113" stroke-width="1"/>
<rect x="370.5" y="675.5" width="80" height="16.3" rx="4" fill="url(#nd)" stroke="#111113" stroke-width="1"/>
<rect x="370.8" y="713.2" width="79.5" height="16" rx="4" fill="url(#nd)" stroke="#111113" stroke-width="1"/>
<rect x="371.8" y="758.2" width="79.7" height="16.5" rx="4" fill="url(#nd)" stroke="#111113" stroke-width="1"/>
<rect x="486.7" y="761.2" width="79.7" height="16.2" rx="4" fill="url(#nd)" stroke="#111113" stroke-width="1"/>
<rect x="612.7" y="713.5" width="79.5" height="16" rx="4" fill="url(#nd)" stroke="#111113" stroke-width="1"/>
<rect x="612.7" y="761.5" width="79.5" height="16" rx="4" fill="url(#nd)" stroke="#111113" stroke-width="1"/>
<rect x="722.8" y="761.3" width="79.6" height="16.4" rx="4" fill="url(#nd)" stroke="#111113" stroke-width="1"/>
<rect x="621.1" y="778.6" width="24.8" height="12.4" rx="3" fill="#2c2d31" stroke="#111113" stroke-width="1"/>
</g>
<!-- bottom bars -->
<g>
<path d="M371.5,644.8 H449.5 V645 Q449.5,647.3 446,647.3 H375 Q371.5,647.3 371.5,645 Z" fill="#5aa02c"/>
<path d="M371.5,688.8 H449.5 V689 Q449.5,691.3 446,691.3 H375 Q371.5,691.3 371.5,689 Z" fill="#8a8a8c"/>
<path d="M371.8,726.3 H449.3 V726.5 Q449.3,728.7 446,728.7 H375 Q371.8,728.7 371.8,726.5 Z" fill="#8a8a8c"/>
<path d="M372.8,771.8 H450.5 V772 Q450.5,774.2 447,774.2 H376 Q372.8,774.2 372.8,772 Z" fill="#5aa02c"/>
<path d="M487.7,774.5 H565.4 V774.7 Q565.4,776.9 562,776.9 H491 Q487.7,776.9 487.7,774.7 Z" fill="#5aa02c"/>
<path d="M613.7,726.6 H691.2 V726.8 Q691.2,729 688,729 H617 Q613.7,729 613.7,726.8 Z" fill="#8a8a8c"/>
<path d="M613.7,774.6 H691.2 V774.8 Q691.2,777 688,777 H617 Q613.7,777 613.7,774.8 Z" fill="#8a8a8c"/>
<path d="M723.8,774.6 H801.4 V774.8 Q801.4,777.2 798,777.2 H727 Q723.8,777.2 723.8,774.8 Z" fill="#8a8a8c"/>
</g>
<!-- labels -->
<g font-family="Liberation Sans" font-size="10.5" fill="#f0f0f0" text-anchor="middle">
<text x="410.5" y="642">MediaIn2</text>
<text x="410.5" y="686">Transform1</text>
<text x="410.5" y="723.5">Merge1</text>
<text x="411.6" y="768.5">Background1</text>
<text x="526.5" y="771.5">PlanoIn</text>
<text x="652.5" y="771.8">Merge2</text>
<text x="762.6" y="771.6">PlanoOut</text>
<text x="617.5" y="723.8" text-anchor="start">PlanarTran...</text>
</g>
<!-- planar diamond -->
<polygon points="682.2,720.8 685.3,717.8 688.4,720.8 685.3,723.8" fill="#d8d8d8"/>
<polygon points="682.2,720.8 685.3,717.8 685.3,723.8" fill="#6a6a6a"/>
<!-- mask circles -->
<circle cx="628" cy="784.8" r="3.6" fill="#050505"/>
<circle cx="638.4" cy="784.8" r="3" fill="#f4f4f4"/>
<!-- inputs: blue right-pointing -->
<g fill="#2aa8e8" stroke="#0e0e10" stroke-width="1" stroke-linejoin="miter">
<polygon points="358.2,633.8 368.8,640 358.2,646.5"/>
<polygon points="358.2,677.8 368.8,684 358.2,690.3"/>
<polygon points="358.5,715.8 369.2,722 358.5,728.4"/>
<polygon points="359,761.7 369.8,768.2 359,774.7"/>
<polygon points="474.3,764.4 484.9,770.6 474.3,776.8"/>
<polygon points="705.7,716.8 695,723 705.7,729.2"/>
<polygon points="648,790.7 653.6,780.4 659.2,790.7"/>
</g>
<!-- yellow -->
<g fill="#f2c21a" stroke="#0e0e10" stroke-width="1">
<polygon points="404.4,662.6 417,662.6 410.7,674.3"/>
<polygon points="404.4,743.3 416.8,743.3 410.6,733.5"/>
<polygon points="600.4,716.5 610.8,723 600.4,729.5"/>
<polygon points="600.4,764.5 610.8,770.8 600.4,777"/>
<polygon points="710.2,764.2 720.5,770.6 710.2,777"/>
</g>
<!-- green -->
<g fill="#7cc21c" stroke="#0e0e10" stroke-width="1">
<polygon points="404.6,704.4 416.6,704.4 410.6,712"/>
<polygon points="646.8,749.2 659.5,749.2 653.2,759.8"/>
</g>
<!-- output squares -->
<g fill="#fafafa" stroke="#0e0e10" stroke-width="1">
<rect x="405.3" y="650.2" width="10.3" height="10.5"/>
<rect x="405.9" y="694.3" width="10.1" height="9.5"/>
<rect x="453" y="718.3" width="10.1" height="10.1"/>
<rect x="406.6" y="746.5" width="10.1" height="10.2"/>
<rect x="569.6" y="765.7" width="10" height="9.7"/>
<rect x="648" y="733.3" width="10.6" height="10"/>
<rect x="695.3" y="765.2" width="10.3" height="10.3"/>
</g>
<rect x="805.5" y="765.2" width="10.2" height="10.4" fill="#8e8e8e" stroke="#0e0e10" stroke-width="1"/>
</svg>
</div>
</body></html>
